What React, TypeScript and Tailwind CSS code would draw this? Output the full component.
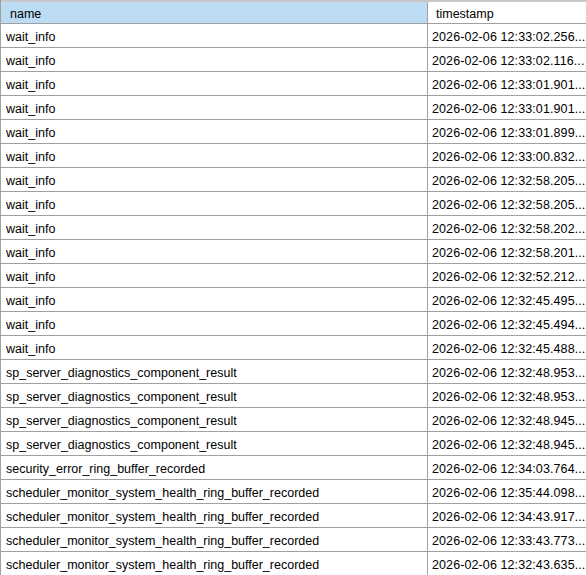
const rows: [string, string][] = [
  ['wait_info', '2026-02-06 12:33:02.256...'],
  ['wait_info', '2026-02-06 12:33:02.116...'],
  ['wait_info', '2026-02-06 12:33:01.901...'],
  ['wait_info', '2026-02-06 12:33:01.901...'],
  ['wait_info', '2026-02-06 12:33:01.899...'],
  ['wait_info', '2026-02-06 12:33:00.832...'],
  ['wait_info', '2026-02-06 12:32:58.205...'],
  ['wait_info', '2026-02-06 12:32:58.205...'],
  ['wait_info', '2026-02-06 12:32:58.202...'],
  ['wait_info', '2026-02-06 12:32:58.201...'],
  ['wait_info', '2026-02-06 12:32:52.212...'],
  ['wait_info', '2026-02-06 12:32:45.495...'],
  ['wait_info', '2026-02-06 12:32:45.494...'],
  ['wait_info', '2026-02-06 12:32:45.488...'],
  ['sp_server_diagnostics_component_result', '2026-02-06 12:32:48.953...'],
  ['sp_server_diagnostics_component_result', '2026-02-06 12:32:48.953...'],
  ['sp_server_diagnostics_component_result', '2026-02-06 12:32:48.945...'],
  ['sp_server_diagnostics_component_result', '2026-02-06 12:32:48.945...'],
  ['security_error_ring_buffer_recorded', '2026-02-06 12:34:03.764...'],
  ['scheduler_monitor_system_health_ring_buffer_recorded', '2026-02-06 12:35:44.098...'],
  ['scheduler_monitor_system_health_ring_buffer_recorded', '2026-02-06 12:34:43.917...'],
  ['scheduler_monitor_system_health_ring_buffer_recorded', '2026-02-06 12:33:43.773...'],
  ['scheduler_monitor_system_health_ring_buffer_recorded', '2026-02-06 12:32:43.635...'],
];

export default function App() {
  return (
    <div className="w-[586px] h-[575px] overflow-hidden bg-white text-black text-[12.5px] font-['Liberation_Sans',Arial,sans-serif]">
      <div className="border-l border-[#a0a0a0]">
        {/* header */}
        <div className="flex h-[24px] border-t-2 border-t-[#c8c8c8] border-b border-b-[#a0a0a0]">
          <div className="w-[427px] shrink-0 bg-[#bcdcf4] border-r border-[#a0a0a0] pl-[9px] flex items-center pt-[4px]">
            name
          </div>
          <div className="flex-1 pl-[8px] flex items-center pt-[4px] whitespace-nowrap">timestamp</div>
        </div>

        {rows.map(([name, ts], i) => (
          <div key={i} className="flex h-[24px] border-b border-[#a0a0a0]">
            <div className="w-[427px] shrink-0 border-r border-[#a0a0a0] pl-[5px] flex items-center pt-[3px] whitespace-nowrap overflow-hidden">
              {name}
            </div>
            <div className="flex-1 pl-[4px] flex items-center pt-[3px] whitespace-nowrap overflow-hidden tracking-[0.1px]">
              {ts}
            </div>
          </div>
        ))}
      </div>
    </div>
  );
}
